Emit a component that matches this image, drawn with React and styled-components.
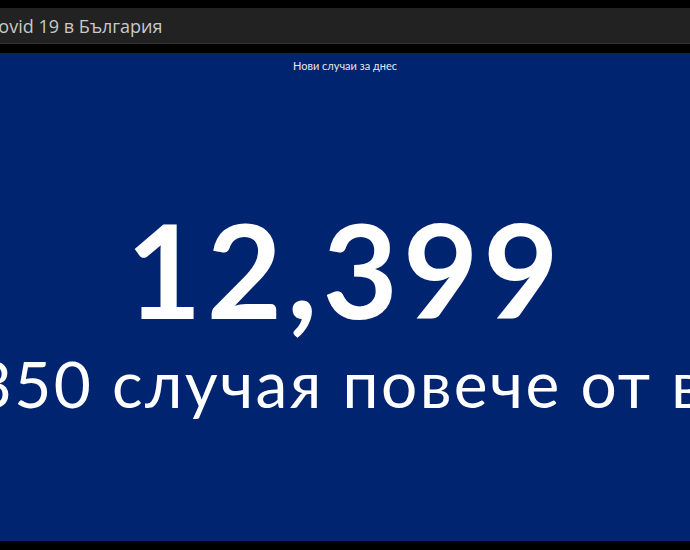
import React from "react";
import styled, { createGlobalStyle } from "styled-components";

const Global = createGlobalStyle`
  html, body { margin: 0; padding: 0; background: #000; }
  body { font-family: Lato, "Open Sans", sans-serif; }
`;

const Page = styled.div`
  width: 690px;
  height: 550px;
  background: #000;
  padding-top: 8px;
  box-sizing: border-box;
  display: flex;
  flex-direction: column;
  gap: 9px;
  overflow: hidden;
`;

const Header = styled.header`
  height: 36px;
  flex: none;
  background: #222222;
  border-bottom: 1px solid #303030;
  box-sizing: border-box;
  display: flex;
  align-items: center;
  overflow: hidden;
`;

const Title = styled.h1`
  margin: 0 0 0 -13px;
  font-family: "Open Sans", Lato, sans-serif;
  font-weight: 400;
  font-size: 18px;
  color: #c9c9c9;
  white-space: nowrap;
`;

const Panel = styled.main`
  height: 488px;
  flex: none;
  background: #002470;
  color: #fff;
  display: flex;
  flex-direction: column;
  align-items: center;
  overflow: hidden;
`;

const Caption = styled.div`
  margin-top: 6px;
  font-size: 11px;
  color: #e4e7ef;
  white-space: nowrap;
`;

const Value = styled.div`
  margin-top: 132px;
  font-size: 130px;
  font-weight: 700;
  letter-spacing: 5px;
  line-height: 1;
  white-space: nowrap;
`;

const Sub = styled.div`
  margin-top: 18px;
  padding-left: 26px;
  font-size: 64px;
  font-weight: 400;
  letter-spacing: 2.4px;
  line-height: 1;
  white-space: nowrap;
`;

export default function App() {
  return (
    <>
      <Global />
      <Page>
        <Header>
          <Title>Covid 19 в България</Title>
        </Header>
        <Panel>
          <Caption>Нови случаи за днес</Caption>
          <Value>12,399</Value>
          <Sub>с 1,350 случая повече от вчера</Sub>
        </Panel>
      </Page>
    </>
  );
}
